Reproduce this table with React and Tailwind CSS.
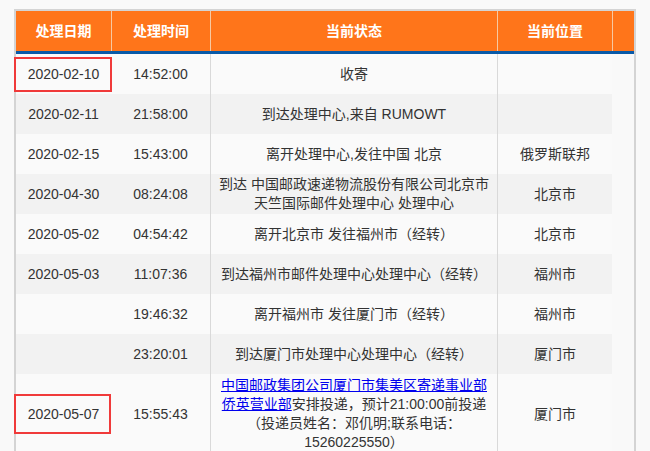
const rows = [
  { date: '2020-02-10', time: '14:52:00', status: ['收寄'], place: '', mark: 'top' },
  { date: '2020-02-11', time: '21:58:00', status: ['到达处理中心,来自 RUMOWT'], place: '' },
  { date: '2020-02-15', time: '15:43:00', status: ['离开处理中心,发往中国 北京'], place: '俄罗斯联邦' },
  { date: '2020-04-30', time: '08:24:08', status: ['到达 中国邮政速递物流股份有限公司北京市', '天竺国际邮件处理中心 处理中心'], place: '北京市' },
  { date: '2020-05-02', time: '04:54:42', status: ['离开北京市 发往福州市（经转）'], place: '北京市' },
  { date: '2020-05-03', time: '11:07:36', status: ['到达福州市邮件处理中心处理中心（经转）'], place: '福州市' },
  { date: '', time: '19:46:32', status: ['离开福州市 发往厦门市（经转）'], place: '福州市' },
  { date: '', time: '23:20:01', status: ['到达厦门市处理中心处理中心（经转）'], place: '厦门市' },
]

function HeadCell({ children, className }) {
  return (
    <div className={`flex items-center justify-center font-bold text-white ${className}`}>
      {children}
    </div>
  )
}

export default function App() {
  return (
    <div
      className="min-h-[451px] bg-[#f9f9f9] pt-[9px] pl-[14px] text-[14px] leading-[19px] text-[#333]"
      style={{ fontFamily: '"Liberation Sans", "Noto Sans CJK SC", sans-serif' }}
    >
      <div className="w-[622px] border-2 border-b-0 border-[#d4d4d4]">
        {/* header */}
        <div className="flex h-[40px] bg-[#ff751a]">
          <HeadCell className="w-[95px]">处理日期</HeadCell>
          <HeadCell className="w-[99px] border-l border-[#f7c9a2]">处理时间</HeadCell>
          <HeadCell className="w-[287px] border-l border-[#f7c9a2]">当前状态</HeadCell>
          <HeadCell className="w-[115px] border-l border-[#f7c9a2]">当前位置</HeadCell>
          <HeadCell className="flex-1 border-l border-[#f7c9a2]"></HeadCell>
        </div>
        <div className="h-[3px] bg-[#0a5aa8]"></div>

        {/* body */}
        <div className="w-[596px]">
          {rows.map((r, i) => (
            <div
              key={i}
              className={`flex min-h-[40px] ${i % 2 === 1 ? 'bg-[#f2f2f2]' : 'bg-[#fafafa]'}`}
            >
              <div className="relative flex w-[95px] items-center justify-center">
                {r.date}
                {r.mark && (
                  <div className="absolute top-[3px] -left-[2px] h-[35px] w-[98px] border-2 border-[#f03a3a]"></div>
                )}
              </div>
              <div className="flex w-[99px] items-center justify-center">{r.time}</div>
              <div className="flex w-[287px] flex-col items-center justify-center border-l border-[#d9d9d9] text-center">
                {r.status.map((s, j) => (
                  <div key={j}>{s}</div>
                ))}
              </div>
              <div className="flex w-[115px] items-center justify-center border-l border-[#d9d9d9]">
                {r.place}
              </div>
            </div>
          ))}

          <div className="flex min-h-[80px] bg-[#fafafa]">
            <div className="relative flex w-[95px] items-center justify-center">
              2020-05-07
              <div className="absolute top-1/2 -left-[2px] h-[40px] w-[97px] -translate-y-1/2 border-2 border-[#f03a3a]"></div>
            </div>
            <div className="flex w-[99px] items-center justify-center">15:55:43</div>
            <div className="flex w-[287px] flex-col items-center justify-center border-l border-[#d9d9d9] py-[2px] text-center">
              <div>
                <a href="#" className="text-[#0000ee] underline">中国邮政集团公司厦门市集美区寄递事业部</a>
              </div>
              <div>
                <a href="#" className="text-[#0000ee] underline">侨英营业部</a>安排投递，预计21:00:00前投递
              </div>
              <div>（投递员姓名：邓仉明;联系电话：</div>
              <div>15260225550）</div>
            </div>
            <div className="flex w-[115px] items-center justify-center border-l border-[#d9d9d9]">厦门市</div>
          </div>
        </div>
      </div>
    </div>
  )
}
